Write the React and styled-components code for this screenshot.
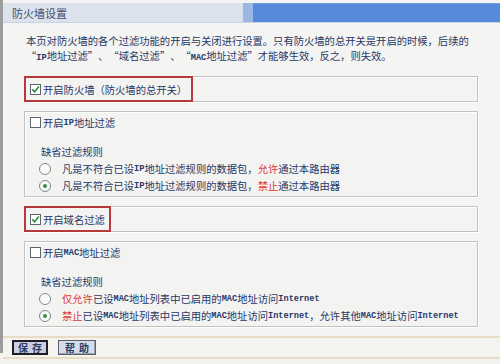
import React from 'react'
import styled, { createGlobalStyle } from 'styled-components'

const GlobalStyle = createGlobalStyle`
  html, body { margin: 0; padding: 0; }
  body {
    width: 500px;
    height: 364px;
    overflow: hidden;
    background: #f3f2ef;
    font-family: "Noto Sans CJK SC", "Noto Sans", sans-serif;
  }
`

const Page = styled.div`
  width: 500px;
  height: 364px;
  display: flex;
  flex-direction: column;
  background-color: #f3f2ef;
`

const Frame = styled.div`
  height: 353px;
  border-left: 3px solid #9c9c9c;
  background-color: #f4f4f2;
  display: flex;
  flex-direction: column;
  box-sizing: border-box;
  padding-top: 3px;
`

const TitleBar = styled.div`
  height: 19px;
  flex: none;
  display: grid;
  grid-template-columns: 240px 10px 1fr;
  border-bottom: 1px solid #c9d3e2;
  background-color: #4f86d8;
`

const TitleLabel = styled.div`
  display: flex;
  align-items: center;
  padding-left: 9px;
  font-size: 11px;
  color: #3e4f70;
  background-color: #dbe2ed;
`

const TitleFade = styled.div`
  background-color: #9bb8e4;
`

const TitleFill = styled.div`
  background-color: #5689d9;
  border-top: 1px solid #6f9be0;
`

const Content = styled.div`
  padding: 10px 21px 0 21px;
  display: flex;
  flex-direction: column;
`

const Intro = styled.p`
  margin: 0 0 10px 2px;
  font-size: 10.3px;
  line-height: 15px;
  color: #273766;
`

const Lat = styled.span`
  font-family: "Liberation Mono", "DejaVu Sans Mono", monospace;
  font-size: 8.6px;
  font-weight: bold;
`

const Quote = styled.span`
  display: inline-block;
  width: 10.3px;
  text-align: ${p => (p.$close ? 'left' : 'right')};
`

const Box = styled.div`
  width: 454px;
  box-sizing: border-box;
  border: 1px solid #c2c2c0;
  box-shadow: inset 1px 1px 0 #ffffff, 1px 1px 0 #ffffff;
  background-color: #f3f3f1;
  margin-bottom: 9px;
  padding: ${p => (p.$bare ? '0' : '2px 0')};
  height: ${p => (p.$bare ? '26px' : 'auto')};
  display: flex;
  flex-direction: column;
`

const Highlight = styled.div`
  margin: -1px 0 -1px -1px;
  height: 26px;
  box-sizing: border-box;
  border: 2px solid #b8393c;
  display: flex;
  align-items: center;
  align-self: flex-start;
  padding: 0 4px 0 4px;
`

const Row = styled.label`
  display: flex;
  align-items: center;
  height: 17px;
  padding-left: ${p => p.$indent ?? 5}px;
  font-size: 10.3px;
  color: #273766;
  white-space: nowrap;
`

const RuleTitle = styled(Row)`
  margin-top: 12px;
  padding-left: 16px;
`

const Check = styled.span`
  width: 11px;
  height: 11px;
  box-sizing: border-box;
  border: 1px solid #5a6670;
  background-color: #fff;
  margin-right: 2px;
  display: inline-flex;
  align-items: center;
  justify-content: center;
  flex: none;
`

const Radio = styled.span`
  width: 12px;
  height: 12px;
  box-sizing: border-box;
  border-radius: 50%;
  border: 1px solid #7d8a8c;
  background-color: #fbfbfb;
  margin-right: 11px;
  display: inline-flex;
  align-items: center;
  justify-content: center;
  flex: none;

  &::after {
    content: '';
    width: 4px;
    height: 4px;
    border-radius: 50%;
    background-color: ${p => (p.$on ? '#3d8b4e' : 'transparent')};
  }
`

const Red = styled.span`
  color: #d8383a;
`

const Footer = styled.div`
  margin-top: auto;
  border-top: 2px solid #eadbc3;
  border-bottom: 2px solid #eadbc3;
  padding: 2px 0 2px 9px;
  display: flex;
  gap: 10px;
  background-color: #f4f3f0;
`

const Button = styled.button`
  width: ${p => (p.$primary ? '36px' : '38px')};
  height: 15px;
  padding: 0;
  font-family: "Noto Sans CJK SC", sans-serif;
  font-size: 10px;
  font-weight: bold;
  letter-spacing: 4px;
  text-indent: 4px;
  line-height: 11px;
  color: #2c3a66;
  background-color: ${p => (p.$primary ? '#c9d0e1' : '#d7dbe5')};
  border: ${p => (p.$primary ? '2px solid #1e1e24' : '1px solid #5a5e6a')};
  box-shadow: ${p => (p.$primary ? 'none' : 'inset -1px -1px 0 #9aa0ae')};
`

const CheckMark = () => (
  <svg width="9" height="9" viewBox="0 0 9 9">
    <path d="M1.2 4.4 L3.6 6.8 L7.9 1.6" fill="none" stroke="#2f8a3c" strokeWidth="1.6" />
  </svg>
)

const Toggle = ({ checked, children }) => (
  <Row>
    <Check>{checked && <CheckMark />}</Check>
    {children}
  </Row>
)

const Choice = ({ on, children }) => (
  <Row $indent={14}>
    <Radio $on={on} />
    {children}
  </Row>
)

const Quoted = ({ children }) => (
  <>
    <Quote>“</Quote>
    {children}
    <Quote $close>”</Quote>
  </>
)

export default function App() {
  return (
    <Page>
      <GlobalStyle />
      <Frame>
        <TitleBar>
          <TitleLabel>防火墙设置</TitleLabel>
          <TitleFade />
          <TitleFill />
        </TitleBar>
        <Content>
          <Intro>
            本页对防火墙的各个过滤功能的开启与关闭进行设置。只有防火墙的总开关是开启的时候，后续的
            <br />
            <Quoted><Lat>IP</Lat>地址过滤</Quoted>、<Quoted>域名过滤</Quoted>、<Quoted><Lat>MAC</Lat>地址过滤</Quoted>才能够生效，反之，则失效。
          </Intro>

          <Box $bare>
            <Highlight>
              <Check><CheckMark /></Check>
              <Row as="span" $indent={0}>开启防火墙（防火墙的总开关）</Row>
            </Highlight>
          </Box>

          <Box>
            <Toggle>开启<Lat>IP</Lat>地址过滤</Toggle>
            <RuleTitle>缺省过滤规则</RuleTitle>
            <Choice>凡是不符合已设<Lat>IP</Lat>地址过滤规则的数据包，<Red>允许</Red>通过本路由器</Choice>
            <Choice on>凡是不符合已设<Lat>IP</Lat>地址过滤规则的数据包，<Red>禁止</Red>通过本路由器</Choice>
          </Box>

          <Box $bare>
            <Highlight>
              <Check><CheckMark /></Check>
              <Row as="span" $indent={0}>开启域名过滤</Row>
            </Highlight>
          </Box>

          <Box>
            <Toggle>开启<Lat>MAC</Lat>地址过滤</Toggle>
            <RuleTitle>缺省过滤规则</RuleTitle>
            <Choice><Red>仅允许</Red>已设<Lat>MAC</Lat>地址列表中已启用的<Lat>MAC</Lat>地址访问<Lat>Internet</Lat></Choice>
            <Choice on><Red>禁止</Red>已设<Lat>MAC</Lat>地址列表中已启用的<Lat>MAC</Lat>地址访问<Lat>Internet</Lat>，允许其他<Lat>MAC</Lat>地址访问<Lat>Internet</Lat></Choice>
          </Box>
        </Content>
        <Footer>
          <Button $primary>保存</Button>
          <Button>帮助</Button>
        </Footer>
      </Frame>
    </Page>
  )
}
